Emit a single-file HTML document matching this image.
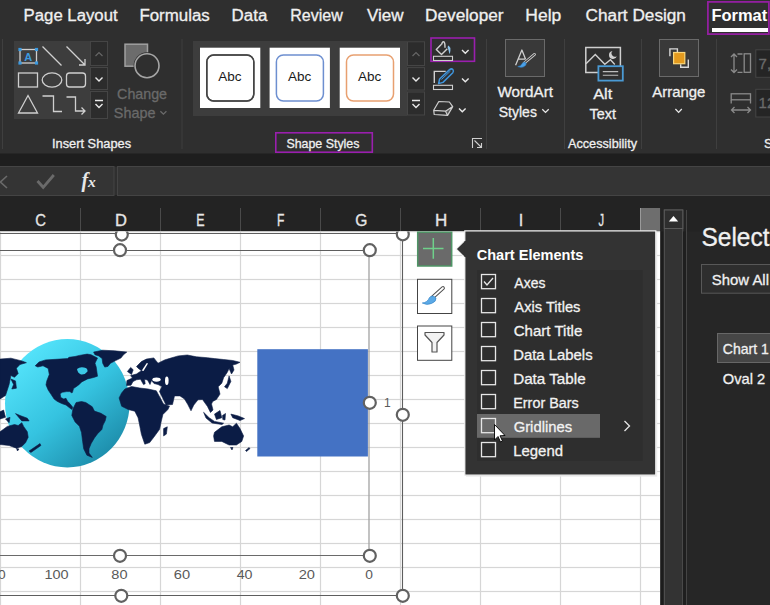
<!DOCTYPE html>
<html><head><meta charset="utf-8"><style>
html,body{margin:0;padding:0;background:#2f2f2f;overflow:hidden;width:770px;height:605px}
svg{display:block}
text{white-space:pre}
</style></head><body>
<svg width="770" height="605" viewBox="0 0 770 605" shape-rendering="geometricPrecision">
<rect x="707.9" y="1.9" width="61" height="32.2" fill="none" stroke="#921f9f" stroke-width="1.8"/>
<rect x="712" y="28" width="56" height="4" fill="#ffffff"/>
<rect x="2.0" y="39" width="1" height="110" fill="#3f3f3f"/>
<rect x="181.5" y="39" width="1" height="110" fill="#3f3f3f"/>
<rect x="486.0" y="39" width="1" height="110" fill="#3f3f3f"/>
<rect x="564.0" y="39" width="1" height="110" fill="#3f3f3f"/>
<rect x="641.0" y="39" width="1" height="110" fill="#3f3f3f"/>
<rect x="716.0" y="39" width="1" height="110" fill="#3f3f3f"/>
<rect x="14" y="41" width="76" height="78" fill="#3d3d3d"/>
<rect x="90.5" y="41.5" width="17" height="24.0" fill="#2c2c2c" stroke="#454545" stroke-width="1"/>
<rect x="90.5" y="67.5" width="17" height="22.0" fill="#2c2c2c" stroke="#454545" stroke-width="1"/>
<rect x="90.5" y="91.5" width="17" height="27.0" fill="#2c2c2c" stroke="#454545" stroke-width="1"/>
<path d="M95.5 56 L99 52.5 L102.5 56" fill="none" stroke="#666" stroke-width="1.2"/>
<path d="M95.5 77.5 L99 81 L102.5 77.5" fill="none" stroke="#e8e8e8" stroke-width="1.4"/>
<path d="M95 100.5 H103 M95.5 104 L99 107.5 L102.5 104" fill="none" stroke="#e8e8e8" stroke-width="1.4"/>
<rect x="20" y="49.5" width="16.5" height="13.5" fill="none" stroke="#cfcfcf" stroke-width="1.3"/>
<rect x="18.4" y="47.9" width="3.2" height="3.2" fill="#3c9ae0"/>
<rect x="34.9" y="47.9" width="3.2" height="3.2" fill="#3c9ae0"/>
<rect x="18.4" y="61.4" width="3.2" height="3.2" fill="#3c9ae0"/>
<rect x="34.9" y="61.4" width="3.2" height="3.2" fill="#3c9ae0"/>
<text x="28.2" y="60.5" font-family="Liberation Sans" font-weight="bold" font-size="11" fill="#3c9ae0" text-anchor="middle">A</text>
<path d="M42.5 46.5 L61.5 65.5" stroke="#cfcfcf" stroke-width="1.3"/>
<path d="M66.5 46.5 L85 65 M85 59 V65 H79" fill="none" stroke="#cfcfcf" stroke-width="1.3"/>
<rect x="18.5" y="73" width="19" height="14" fill="none" stroke="#cfcfcf" stroke-width="1.3"/>
<ellipse cx="52" cy="80" rx="9.8" ry="7.2" fill="none" stroke="#cfcfcf" stroke-width="1.3"/>
<rect x="66.5" y="73" width="19" height="14" rx="3" fill="none" stroke="#cfcfcf" stroke-width="1.3"/>
<path d="M28 95.5 L37.5 113 H18.5 Z" fill="none" stroke="#cfcfcf" stroke-width="1.3" stroke-linejoin="miter"/>
<path d="M42.5 96 H53.5 V111.5 H62" fill="none" stroke="#cfcfcf" stroke-width="1.3"/>
<path d="M66.5 97 H75.5 V111 H85 M81.5 107.5 L85 111 L81.5 114.5" fill="none" stroke="#cfcfcf" stroke-width="1.3"/>
<rect x="125" y="44.2" width="22.5" height="22" fill="#6c6c6c" stroke="#a0a0a0" stroke-width="1.5"/>
<circle cx="147" cy="65.7" r="13.4" fill="#2f2f2f"/>
<circle cx="147" cy="65.7" r="12" fill="#2f2f2f" stroke="#a5a5a5" stroke-width="1.6"/>
<path d="M160.4 111.2 L163.4 114.2 L166.4 111.2" fill="none" stroke="#6a6a6a" stroke-width="1.3"/>
<rect x="193" y="41" width="214" height="75" fill="#3d3d3d"/>
<rect x="200" y="47.7" width="60.3" height="60.3" fill="#ffffff"/>
<rect x="206.8" y="55" width="47" height="46" rx="7" fill="none" stroke="#555555" stroke-width="1.5"/>
<rect x="269.6" y="47.7" width="60.3" height="60.3" fill="#ffffff"/>
<rect x="276.40000000000003" y="55" width="47" height="46" rx="7" fill="none" stroke="#6d8fd0" stroke-width="1.5"/>
<rect x="339.7" y="47.7" width="60.3" height="60.3" fill="#ffffff"/>
<rect x="346.5" y="55" width="47" height="46" rx="7" fill="none" stroke="#e8a070" stroke-width="1.5"/>
<rect x="206.8" y="55" width="47" height="46" rx="7" fill="none" stroke="#444" stroke-width="1.5"/>
<rect x="407.5" y="41.8" width="17" height="23.700000000000003" fill="#2c2c2c" stroke="#454545" stroke-width="1"/>
<rect x="407.5" y="67.6" width="17" height="22.400000000000006" fill="#2c2c2c" stroke="#454545" stroke-width="1"/>
<rect x="407.5" y="92" width="17" height="23" fill="#2c2c2c" stroke="#454545" stroke-width="1"/>
<path d="M412.5 56 L416 52.5 L419.5 56" fill="none" stroke="#666" stroke-width="1.2"/>
<path d="M412.5 77.5 L416 81 L419.5 77.5" fill="none" stroke="#e8e8e8" stroke-width="1.4"/>
<path d="M412 100.5 H420 M412.5 104 L416 107.5 L419.5 104" fill="none" stroke="#e8e8e8" stroke-width="1.4"/>
<rect x="431" y="38" width="43.5" height="23.3" fill="none" stroke="#9a1fae" stroke-width="1.6"/>
<path d="M441.2 44.5 L436.3 49.5 L441.5 54.6 L447.3 48.8" fill="none" stroke="#cfcfcf" stroke-width="1.4" stroke-linejoin="round"/>
<path d="M441.6 44.2 Q442.8 40.5 444.3 42.2 Q445 43.5 445 47.2" fill="none" stroke="#cfcfcf" stroke-width="1.4" stroke-linecap="round"/>
<path d="M448.6 45.5 Q450.6 47 450.4 50.5 Q450.2 53 449.5 54 Q448.6 50 447.6 47.5 Q447.6 46 448.6 45.5 Z" fill="#8cc3ea"/>
<rect x="433.5" y="56.3" width="19" height="4.2" fill="none" stroke="#cfcfcf" stroke-width="1.1"/>
<path d="M462 50 L465.3 53.2 L468.6 50" fill="none" stroke="#e8e8e8" stroke-width="1.4"/>
<path d="M445.7 71.4 H434.3 V83" fill="none" stroke="#cfcfcf" stroke-width="1.4"/>
<path d="M438.6 83.6 L439.6 79 L449.6 69.6 Q451.5 68.2 452.9 69.6 Q454.2 71.2 452.8 72.8 L443 82.4 Z" fill="#2f2f2f" stroke="#3f95dd" stroke-width="1.5" stroke-linejoin="round"/>
<path d="M441.5 79.5 L450.5 71" stroke="#3f95dd" stroke-width="1" />
<rect x="433.5" y="85.3" width="19" height="4.2" fill="none" stroke="#cfcfcf" stroke-width="1.1"/>
<path d="M462 78.5 L465.3 81.8 L468.6 78.5" fill="none" stroke="#e8e8e8" stroke-width="1.4"/>
<path d="M445.5 111.2 L452.7 106.6 L447.6 115.4 Z" fill="#5a5a5a"/>
<path d="M433.7 110.3 L438.8 101.5 L449.4 102 L452.7 106.6 L447.6 115.4 L434.2 114.5 Z M433.7 110.3 L445.5 111.2 L452.7 106.6 M445.5 111.2 L447.6 115.4" fill="none" stroke="#cfcfcf" stroke-width="1.2" stroke-linejoin="round"/>
<path d="M459 108.5 L462.3 111.8 L465.6 108.5" fill="none" stroke="#e8e8e8" stroke-width="1.4"/>
<rect x="275.8" y="132.8" width="96.5" height="19.4" fill="none" stroke="#9a1fae" stroke-width="1.6"/>
<path d="M472.5 148 V138.5 H482 M474.5 140.5 L481.5 147.5 M477 147.5 H481.5 V143" fill="none" stroke="#cfcfcf" stroke-width="1.1"/>
<rect x="505.5" y="39.5" width="39" height="37" fill="#393939" stroke="#6a6a6a" stroke-width="1"/>
<path d="M515.6 65.2 L521.9 50 L525.6 59.2 M518.5 59.2 H525.6" fill="none" stroke="#cfcfcf" stroke-width="1.3" stroke-linejoin="round"/>
<path d="M524 63.2 L534.5 54.4" stroke="#cfcfcf" stroke-width="2.8" stroke-linecap="round"/>
<path d="M524 63.2 L534.5 54.4" stroke="#393939" stroke-width="1.1" stroke-linecap="round"/>
<path d="M517.8 66.6 Q521 66.2 522.2 63.4 Q524.5 61.2 526.2 63 Q526.5 65.5 523.5 66.8 Q520.5 68 517.8 66.6 Z" fill="#4aa0e6" stroke="#2f7fc8" stroke-width="0.6"/>
<path d="M542.3 109.2 L545.5 112.4 L548.7 109.2" fill="none" stroke="#e8e8e8" stroke-width="1.3"/>
<path d="M598.5 72.6 H585.8 V47.6 H620.4 V66" fill="none" stroke="#cfcfcf" stroke-width="1.5"/>
<path d="M586 63.8 L595.3 54.5 L604.8 64.2 L610.5 59.8 L614.8 64.4" fill="none" stroke="#cfcfcf" stroke-width="1.4"/>
<path d="M612.5 51 A4 4 0 1 0 616.8 56.2 A3.4 3.4 0 0 1 612.5 51 Z" fill="#cfcfcf"/>
<rect x="598.4" y="66.2" width="24.4" height="14.4" fill="#2f2f2f" stroke="#4a9ad4" stroke-width="1.8"/>
<path d="M602.8 71.6 H618.2 M602.8 75.3 H618.2" stroke="#bdbdbd" stroke-width="1.1"/>
<rect x="659.5" y="39.5" width="39" height="37" fill="#393939" stroke="#6a6a6a" stroke-width="1"/>
<path d="M669.9 56.2 V48.9 H677.4 V52 M688.3 59.6 V67.3 H680.7 V64.2" fill="none" stroke="#d8d8d8" stroke-width="1.4"/>
<rect x="673.6" y="52.5" width="11.2" height="11.2" fill="#e39a1e" stroke="#fbd77a" stroke-width="1.2"/>
<path d="M675.4 109 L678.6 112.4 L681.8 109" fill="none" stroke="#e8e8e8" stroke-width="1.3"/>
<path d="M734 54 V72.5 M731 57 L734 54 L737 57 M731 69.5 L734 72.5 L737 69.5 M737.5 54 H742.5 M737.5 72.3 H742.5" fill="none" stroke="#8a8a8a" stroke-width="1.3"/>
<rect x="744.2" y="53.8" width="6.3" height="18.5" fill="none" stroke="#8a8a8a" stroke-width="1.3"/>
<rect x="755.8" y="49.8" width="16" height="27.5" fill="#252525" stroke="#444444" stroke-width="1"/>
<rect x="731.2" y="93.8" width="19.3" height="6" fill="none" stroke="#8a8a8a" stroke-width="1.3"/>
<path d="M731.2 100 V103.5 M750.5 100 V103.5 M731.5 110 H750.5 M734.5 107 L731.5 110 L734.5 113 M747.5 107 L750.5 110 L747.5 113" fill="none" stroke="#8a8a8a" stroke-width="1.3"/>
<rect x="755.8" y="89.3" width="16" height="27.7" fill="#252525" stroke="#444444" stroke-width="1"/>
<rect x="0" y="153.5" width="770" height="13" fill="#1e1e1e"/>
<rect x="0" y="195" width="770" height="13" fill="#232323"/>
<rect x="-2" y="166.5" width="116" height="29" fill="#343434" stroke="#444444" stroke-width="1"/>
<rect x="117.5" y="166.5" width="660" height="29" fill="#343434" stroke="#444444" stroke-width="1"/>
<path d="M7 176 L0.5 182 L7 188" fill="none" stroke="#6a6a6a" stroke-width="1.6"/>
<path d="M37.5 181 L43.2 187.3 L53.8 175" fill="none" stroke="#6a6a6a" stroke-width="2.8"/>
<rect x="0" y="208" width="640" height="23.5" fill="#232323"/>
<rect x="80" y="208" width="1" height="23.5" fill="#4a4a4a"/>
<rect x="160" y="208" width="1" height="23.5" fill="#4a4a4a"/>
<rect x="240" y="208" width="1" height="23.5" fill="#4a4a4a"/>
<rect x="320" y="208" width="1" height="23.5" fill="#4a4a4a"/>
<rect x="400" y="208" width="1" height="23.5" fill="#4a4a4a"/>
<rect x="480" y="208" width="1" height="23.5" fill="#4a4a4a"/>
<rect x="560" y="208" width="1" height="23.5" fill="#4a4a4a"/>
<rect x="640" y="208" width="20" height="23.5" fill="#6e6e6e"/>
<rect x="640" y="208" width="1" height="23.5" fill="#9a9a9a"/>
<rect x="0" y="231.5" width="660.5" height="380" fill="#ffffff"/>
<rect x="0" y="231" width="660" height="1.2" fill="#c8c8c8"/>
<rect x="-0.09999999999999998" y="232" width="1.2" height="380" fill="#d6d6d6"/>
<rect x="79.9" y="232" width="1.2" height="380" fill="#d6d6d6"/>
<rect x="159.9" y="232" width="1.2" height="380" fill="#d6d6d6"/>
<rect x="239.9" y="232" width="1.2" height="380" fill="#d6d6d6"/>
<rect x="319.9" y="232" width="1.2" height="380" fill="#d6d6d6"/>
<rect x="399.9" y="232" width="1.2" height="380" fill="#d6d6d6"/>
<rect x="479.9" y="232" width="1.2" height="380" fill="#d6d6d6"/>
<rect x="559.9" y="232" width="1.2" height="380" fill="#d6d6d6"/>
<rect x="639.9" y="232" width="1.2" height="380" fill="#d6d6d6"/>
<rect x="0" y="254.9" width="660" height="1.2" fill="#d6d6d6"/>
<rect x="0" y="278.9" width="660" height="1.2" fill="#d6d6d6"/>
<rect x="0" y="302.9" width="660" height="1.2" fill="#d6d6d6"/>
<rect x="0" y="326.9" width="660" height="1.2" fill="#d6d6d6"/>
<rect x="0" y="350.9" width="660" height="1.2" fill="#d6d6d6"/>
<rect x="0" y="374.9" width="660" height="1.2" fill="#d6d6d6"/>
<rect x="0" y="398.9" width="660" height="1.2" fill="#d6d6d6"/>
<rect x="0" y="422.9" width="660" height="1.2" fill="#d6d6d6"/>
<rect x="0" y="446.9" width="660" height="1.2" fill="#d6d6d6"/>
<rect x="0" y="470.9" width="660" height="1.2" fill="#d6d6d6"/>
<rect x="0" y="494.9" width="660" height="1.2" fill="#d6d6d6"/>
<rect x="0" y="518.9" width="660" height="1.2" fill="#d6d6d6"/>
<rect x="0" y="542.9" width="660" height="1.2" fill="#d6d6d6"/>
<rect x="0" y="566.9" width="660" height="1.2" fill="#d6d6d6"/>
<rect x="0" y="590.9" width="660" height="1.2" fill="#d6d6d6"/>
<rect x="660.5" y="208" width="110" height="400" fill="#232323"/>
<rect x="687" y="231.5" width="83" height="380" fill="#262626"/>
<rect x="660.5" y="231.5" width="3.5" height="380" fill="#1c1c1c"/>
<rect x="664.3" y="210" width="18.5" height="400" fill="#333333" stroke="#555555" stroke-width="1"/>
<rect x="664.3" y="210" width="18.5" height="18.5" fill="#2e2e2e" stroke="#5a5a5a" stroke-width="1"/>
<path d="M668.8 221.5 L673.5 216 L678.2 221.5 Z" fill="#ffffff"/>
<rect x="683" y="231.5" width="3" height="400" fill="#1f1f1f"/>
<rect x="686" y="210" width="1" height="400" fill="#454545"/>
<rect x="701.5" y="264.5" width="80" height="28.7" fill="#2e2e2e" stroke="#585858" stroke-width="1"/>
<rect x="717.5" y="333.5" width="60" height="29" fill="#464646" stroke="#676767" stroke-width="1"/>
<path d="M-10 233.5 H402.5 V595.5 H-10" fill="none" stroke="#5e5e5e" stroke-width="1.1"/>
<path d="M-10 250.5 H369" fill="none" stroke="#5e5e5e" stroke-width="1.1"/>
<path d="M369 250.5 V555.5" fill="none" stroke="#a2a2a2" stroke-width="1.3"/>
<path d="M369 555.5 H-10" fill="none" stroke="#6a6a6a" stroke-width="1.1"/>
<defs><linearGradient id="gl" x1="0.15" y1="0.1" x2="0.85" y2="0.95"><stop offset="0" stop-color="#55e4fb"/><stop offset="0.5" stop-color="#35c3e0"/><stop offset="1" stop-color="#1b88a6"/></linearGradient></defs>
<ellipse cx="67.3" cy="403.2" rx="62.3" ry="64.2" fill="url(#gl)"/>
<path d="M35.2 365.8 L39.1 361.9 L45.6 359.9 L56.0 359.3 L67.7 358.6 L69.0 357.3 L75.0 356.5 L79.4 355.4 L87.1 354.1 L91.0 354.7 L97.5 358.0 L95.0 363.2 L96.2 367.0 L97.5 376.2 L93.6 377.5 L87.6 378.9 L81.7 381.9 L78.7 384.9 L73.5 388.6 L72.7 391.6 L72.0 393.0 L69.8 391.6 L66.8 391.6 L62.3 392.3 L60.1 393.8 L60.8 397.5 L63.8 399.0 L66.0 398.3 L67.5 401.3 L69.8 403.5 L72.7 407.2 L72.0 409.4 L69.8 408.0 L66.0 405.0 L61.6 403.5 L57.1 401.3 L54.1 399.0 L51.2 394.6 L48.2 390.1 L46.0 384.9 L46.7 381.2 L49.3 374.5 L48.2 368.4 L43.0 365.8 L37.8 367.0 Z M93.6 352.1 L102.7 350.2 L114.4 350.8 L126.8 352.1 L123.5 354.7 L120.9 358.0 L115.7 360.6 L110.5 363.2 L107.9 366.4 L104.7 367.1 L102.7 363.2 L102.1 358.6 L98.8 356.0 L94.9 354.7 Z M76.1 402.5 L81.5 401.5 L85.8 402.5 L92.3 406.8 L94.4 411.1 L100.9 413.3 L106.2 416.5 L105.2 420.8 L103.0 425.1 L101.9 429.4 L97.6 433.7 L94.4 438.0 L91.2 443.4 L89.0 448.8 L89.0 453.1 L92.3 457.4 L86.9 455.2 L83.7 448.8 L82.6 441.2 L81.5 432.6 L79.4 426.2 L75.1 421.9 L71.8 415.4 L72.9 409.0 Z M127.4 371.5 L130.7 367.4 L133.2 369.8 L131.5 374.5 Z M126.6 385.5 L126.9 380.6 L132.4 378.1 L130.7 375.6 L136.5 374.0 L141.4 370.7 L138.1 368.2 L136.5 366.5 L141.4 361.6 L146.4 359.1 L153.8 357.9 L158.0 363.2 L164.6 359.9 L169.1 358.6 L178.2 355.9 L187.3 355.0 L196.4 356.8 L207.3 357.7 L214.5 358.6 L223.6 359.5 L232.7 360.5 L240.0 362.3 L236.4 364.1 L232.7 365.0 L234.0 370.0 L231.5 374.0 L229.1 368.6 L227.3 372.3 L223.6 377.7 L221.8 383.2 L218.2 386.8 L220.0 394.1 L216.4 399.5 L212.7 401.4 L211.5 404.0 L213.0 410.0 L210.5 412.5 L207.5 406.5 L205.0 403.0 L202.5 399.5 L198.0 399.8 L193.8 405.0 L191.0 410.8 L187.8 404.5 L184.5 399.0 L180.0 395.9 L174.5 395.9 L172.5 404.5 L166.0 405.0 L159.5 391.5 L162.0 386.5 L158.0 384.5 L154.0 383.5 L151.5 380.5 L150.0 384.5 L147.5 380.0 L144.5 379.2 L145.2 383.8 L143.5 384.6 L140.5 379.2 L136.5 379.8 L133.0 381.5 L131.0 385.2 Z M119.1 397.9 L121.6 393.0 L124.9 389.0 L131.5 386.5 L139.8 388.0 L148.1 389.0 L156.3 390.8 L157.5 393.0 L163.5 404.0 L169.5 406.2 L167.9 409.5 L162.9 414.5 L161.3 421.1 L159.6 429.3 L154.7 436.0 L149.7 442.6 L144.8 444.2 L141.4 434.3 L139.8 426.0 L138.1 417.8 L134.8 411.2 L128.2 409.5 L121.6 406.2 Z M163.6 428.6 L167.3 426.8 L166.4 434.1 L163.6 435.9 Z M229.1 375.9 L230.9 381.4 L227.3 388.6 L224.5 386.8 L227.3 383.2 Z M203.6 412.3 L209.1 417.7 L214.5 421.4 L223.6 423.2 L222.0 424.5 L212.0 423.0 L206.0 418.0 Z M214.5 414.1 L220.0 410.5 L221.8 417.7 L216.4 419.5 Z M222.5 415.5 L225.5 413.5 L225.0 420.0 L222.8 419.5 Z M230.9 414.1 L238.2 415.9 L244.5 418.6 L240.0 420.5 L232.7 417.7 Z M214.5 432.3 L221.8 426.8 L229.1 425.0 L232.7 426.8 L236.4 423.2 L240.0 428.6 L243.6 435.9 L241.8 441.4 L236.4 445.0 L229.1 445.0 L221.8 441.4 L214.5 441.4 L213.6 435.9 Z M230.5 447.5 L233.0 447.5 L232.0 450.0 Z M245.5 450.5 L249.1 447.6 L250.0 448.6 L246.5 451.5 Z M0.0 359.1 L10.9 358.2 L21.8 360.9 L26.4 362.7 L20.0 364.5 L16.4 368.2 L18.2 373.6 L14.5 377.3 L10.9 375.5 L9.1 384.5 L5.5 395.5 L0.0 399.0 Z M10.9 379.0 L15.5 380.9 L16.4 388.2 L11.8 389.0 L13.6 384.5 Z M0.0 411.8 L3.6 410.0 L5.5 417.3 L0.0 419.0 Z M5.5 419.0 L10.0 417.3 L9.1 422.7 Z M15.5 413.6 L20.0 415.5 L27.3 418.2 L29.1 420.9 L21.8 420.9 Z M0.0 431.8 L7.3 426.4 L14.5 424.5 L18.2 425.5 L21.8 422.7 L23.6 426.4 L27.3 431.8 L28.2 437.3 L25.5 442.7 L21.8 446.4 L16.4 448.2 L9.1 445.5 L0.0 444.5 Z M16.5 448.5 L19.0 449.0 L17.5 451.0 Z M29.1 451.0 L40.0 443.6 L40.9 445.5 L30.9 452.5 Z" fill="#0b1c45" stroke="#0b1c45" stroke-width="0.6" stroke-linejoin="round"/>
<path d="M77 369 Q80 366.5 84 367.5 Q88 368 87.5 371.5 Q85 375 81 374.5 Q77.5 373 77 369 Z" fill="#3cc8e6"/>
<path d="M141.8 370.5 L146.8 363 L148 363.6 L143.5 371 Z" fill="#ffffff"/>
<ellipse cx="156.5" cy="379.6" rx="4.2" ry="2.1" fill="#ffffff"/>
<ellipse cx="166.8" cy="380.8" rx="1.8" ry="4.2" fill="#ffffff"/>
<rect x="257.3" y="349.2" width="110.6" height="107.3" fill="#4472c4"/>
<circle cx="120" cy="250.2" r="6" fill="#ffffff" stroke="#616161" stroke-width="2.2"/>
<circle cx="369.8" cy="250.2" r="6" fill="#ffffff" stroke="#616161" stroke-width="2.2"/>
<circle cx="369.8" cy="402.8" r="6" fill="#ffffff" stroke="#616161" stroke-width="2.2"/>
<circle cx="369.8" cy="555.8" r="6" fill="#ffffff" stroke="#616161" stroke-width="2.2"/>
<circle cx="120" cy="555.8" r="6" fill="#ffffff" stroke="#616161" stroke-width="2.2"/>
<circle cx="402.8" cy="414.8" r="6" fill="#ffffff" stroke="#616161" stroke-width="2.2"/>
<circle cx="402.8" cy="595.8" r="6" fill="#ffffff" stroke="#616161" stroke-width="2.2"/>
<circle cx="121.3" cy="595.8" r="6" fill="#ffffff" stroke="#616161" stroke-width="2.2"/>
<clipPath id="below"><rect x="0" y="231.5" width="770" height="400"/></clipPath>
<g clip-path="url(#below)">
<circle cx="121.8" cy="234.6" r="6" fill="#ffffff" stroke="#616161" stroke-width="2.2"/>
<circle cx="402.8" cy="234.3" r="6" fill="#ffffff" stroke="#616161" stroke-width="2.2"/>
</g>
<rect x="417.7" y="232.2" width="34" height="33.8" fill="#6a6a6a" stroke="#4f9566" stroke-width="1.5"/>
<path d="M423 248.5 H443.5 M433.3 238 V258.8" stroke="#6fd08a" stroke-width="1.5"/>
<rect x="417.5" y="279.3" width="34.3" height="34.2" fill="#ffffff" stroke="#444444" stroke-width="1"/>
<path d="M433 297 L443 288" stroke="#505050" stroke-width="3.8" stroke-linecap="round"/>
<path d="M433 297 L443 288" stroke="#ffffff" stroke-width="1.8" stroke-linecap="round"/>
<path d="M422.3 303 Q427.5 302.5 429.5 297.5 Q432.5 294.5 436 298 Q436.5 301.5 431.5 303.5 Q426.5 305.5 422.3 303 Z" fill="#5aa9e6" stroke="#3a87c8" stroke-width="0.7"/>
<rect x="417.5" y="326" width="34.3" height="34.3" fill="#ffffff" stroke="#444444" stroke-width="1"/>
<path d="M425 332.5 H444 V335 L437 342.5 V352 H432 V342.5 L425 335 Z" fill="#f2f2f2" stroke="#555" stroke-width="1.2" stroke-linejoin="round"/>
<rect x="466" y="232" width="191.2" height="244.6" fill="#e8e8e8"/>
<path d="M464.8 230.8 H655.8 V475.2 H464.8 V257.6 L456 249 L464.8 240.6 Z" fill="#333333" stroke="#f4f4f4" stroke-width="1.2"/>
<rect x="464.5" y="241" width="1.5" height="16" fill="#333333"/>
<rect x="477" y="270" width="165.6" height="191" fill="#2e2e2e"/>
<rect x="477" y="414" width="123" height="23.8" fill="#696969"/>
<rect x="481.5" y="274.5" width="14" height="14.2" fill="none" stroke="#e6e6e6" stroke-width="1.3"/>
<rect x="481.5" y="298.5" width="14" height="14.2" fill="none" stroke="#e6e6e6" stroke-width="1.3"/>
<rect x="481.5" y="322.5" width="14" height="14.2" fill="none" stroke="#e6e6e6" stroke-width="1.3"/>
<rect x="481.5" y="346.5" width="14" height="14.2" fill="none" stroke="#e6e6e6" stroke-width="1.3"/>
<rect x="481.5" y="370.5" width="14" height="14.2" fill="none" stroke="#e6e6e6" stroke-width="1.3"/>
<rect x="481.5" y="394.5" width="14" height="14.2" fill="none" stroke="#e6e6e6" stroke-width="1.3"/>
<rect x="481.5" y="418.5" width="14" height="14.2" fill="none" stroke="#e6e6e6" stroke-width="1.3"/>
<rect x="481.5" y="442.5" width="14" height="14.2" fill="none" stroke="#e6e6e6" stroke-width="1.3"/>
<path d="M484 281.5 L487 285 L493 278" fill="none" stroke="#e6e6e6" stroke-width="1.3"/>
<path d="M624.5 421 L629.5 426 L624.5 431" fill="none" stroke="#e6e6e6" stroke-width="1.3"/>
<path d="M494.5 424.5 V440 L498 436.5 L500.5 442 L502.5 441 L500 435.8 L505 435.5 Z" fill="#ffffff" stroke="#000" stroke-width="0.9" stroke-linejoin="round"/>
<text x="23.63" y="21" font-size="16" fill="#f0f0f0" font-family="Liberation Sans" stroke="#f0f0f0" stroke-width="0.3" textLength="94.00" lengthAdjust="spacingAndGlyphs">Page Layout</text>
<text x="139.42" y="21" font-size="16" fill="#f0f0f0" font-family="Liberation Sans" stroke="#f0f0f0" stroke-width="0.3" textLength="70.29" lengthAdjust="spacingAndGlyphs">Formulas</text>
<text x="231.61" y="21" font-size="16" fill="#f0f0f0" font-family="Liberation Sans" stroke="#f0f0f0" stroke-width="0.3" textLength="35.69" lengthAdjust="spacingAndGlyphs">Data</text>
<text x="290.18" y="21" font-size="16" fill="#f0f0f0" font-family="Liberation Sans" stroke="#f0f0f0" stroke-width="0.3" textLength="52.58" lengthAdjust="spacingAndGlyphs">Review</text>
<text x="366.93" y="21" font-size="16" fill="#f0f0f0" font-family="Liberation Sans" stroke="#f0f0f0" stroke-width="0.3" textLength="36.53" lengthAdjust="spacingAndGlyphs">View</text>
<text x="425.09" y="21" font-size="16" fill="#f0f0f0" font-family="Liberation Sans" stroke="#f0f0f0" stroke-width="0.3" textLength="78.50" lengthAdjust="spacingAndGlyphs">Developer</text>
<text x="525.37" y="21" font-size="16" fill="#f0f0f0" font-family="Liberation Sans" stroke="#f0f0f0" stroke-width="0.3" textLength="35.86" lengthAdjust="spacingAndGlyphs">Help</text>
<text x="585.63" y="21" font-size="16" fill="#f0f0f0" font-family="Liberation Sans" stroke="#f0f0f0" stroke-width="0.3" textLength="100.29" lengthAdjust="spacingAndGlyphs">Chart Design</text>
<text x="711.40" y="21" font-size="16" fill="#ffffff" font-family="Liberation Sans" font-weight="bold" textLength="55.80" lengthAdjust="spacingAndGlyphs">Format</text>
<text x="117.08" y="99.1" font-size="15" fill="#6a6a6a" font-family="Liberation Sans" stroke="#6a6a6a" stroke-width="0.3" textLength="49.96" lengthAdjust="spacingAndGlyphs">Change</text>
<text x="113.85" y="118.2" font-size="15" fill="#6a6a6a" font-family="Liberation Sans" stroke="#6a6a6a" stroke-width="0.3" textLength="41.70" lengthAdjust="spacingAndGlyphs">Shape</text>
<text x="52.02" y="147.8" font-size="12.5" fill="#f0f0f0" font-family="Liberation Sans" stroke="#f0f0f0" stroke-width="0.3" textLength="79.05" lengthAdjust="spacingAndGlyphs">Insert Shapes</text>
<text x="230.00" y="80.9" font-size="13.5" fill="#1a1a1a" font-family="Liberation Sans" text-anchor="middle">Abc</text>
<text x="299.60" y="80.9" font-size="13.5" fill="#1a1a1a" font-family="Liberation Sans" text-anchor="middle">Abc</text>
<text x="369.70" y="80.9" font-size="13.5" fill="#1a1a1a" font-family="Liberation Sans" text-anchor="middle">Abc</text>
<text x="286.44" y="148" font-size="13" fill="#f0f0f0" font-family="Liberation Sans" stroke="#f0f0f0" stroke-width="0.3" textLength="73.01" lengthAdjust="spacingAndGlyphs">Shape Styles</text>
<text x="497.53" y="96.8" font-size="15.2" fill="#f0f0f0" font-family="Liberation Sans" stroke="#f0f0f0" stroke-width="0.3" textLength="55.48" lengthAdjust="spacingAndGlyphs">WordArt</text>
<text x="498.76" y="117.2" font-size="15.2" fill="#f0f0f0" font-family="Liberation Sans" stroke="#f0f0f0" stroke-width="0.3" textLength="38.14" lengthAdjust="spacingAndGlyphs">Styles</text>
<text x="593.17" y="98.9" font-size="15.2" fill="#f0f0f0" font-family="Liberation Sans" stroke="#f0f0f0" stroke-width="0.3" textLength="19.05" lengthAdjust="spacingAndGlyphs">Alt</text>
<text x="589.50" y="118.8" font-size="15.2" fill="#f0f0f0" font-family="Liberation Sans" stroke="#f0f0f0" stroke-width="0.3" textLength="26.40" lengthAdjust="spacingAndGlyphs">Text</text>
<text x="567.98" y="147.7" font-size="13" fill="#f0f0f0" font-family="Liberation Sans" stroke="#f0f0f0" stroke-width="0.3" textLength="69.05" lengthAdjust="spacingAndGlyphs">Accessibility</text>
<text x="652.27" y="97.2" font-size="15.2" fill="#f0f0f0" font-family="Liberation Sans" stroke="#f0f0f0" stroke-width="0.3" textLength="53.09" lengthAdjust="spacingAndGlyphs">Arrange</text>
<text x="758.60" y="68.7" font-size="15" fill="#6a6a6a" font-family="Liberation Sans" stroke="#6a6a6a" stroke-width="0.3">7,5</text>
<text x="758.60" y="108.4" font-size="15" fill="#6a6a6a" font-family="Liberation Sans" stroke="#6a6a6a" stroke-width="0.3">12</text>
<text x="764.00" y="147.5" font-size="13" fill="#f0f0f0" font-family="Liberation Sans" stroke="#f0f0f0" stroke-width="0.3">S</text>
<text x="81.50" y="186.5" font-size="20" fill="#e8e8e8" font-family="Liberation Serif" font-weight="bold" font-style="italic">f</text>
<text x="88.00" y="187.3" font-size="15.5" fill="#e8e8e8" font-family="Liberation Serif" font-weight="bold" font-style="italic">x</text>
<text x="35.35" y="225.8" font-size="16.3" fill="#e6e6e6" font-family="Liberation Sans" stroke="#e6e6e6" stroke-width="0.3" textLength="10.72" lengthAdjust="spacingAndGlyphs">C</text>
<text x="114.94" y="225.8" font-size="16.3" fill="#e6e6e6" font-family="Liberation Sans" stroke="#e6e6e6" stroke-width="0.3" textLength="11.95" lengthAdjust="spacingAndGlyphs">D</text>
<text x="196.37" y="225.8" font-size="16.3" fill="#e6e6e6" font-family="Liberation Sans" stroke="#e6e6e6" stroke-width="0.3" textLength="8.37" lengthAdjust="spacingAndGlyphs">E</text>
<text x="277.01" y="225.8" font-size="16.3" fill="#e6e6e6" font-family="Liberation Sans" stroke="#e6e6e6" stroke-width="0.3" textLength="7.37" lengthAdjust="spacingAndGlyphs">F</text>
<text x="355.31" y="225.8" font-size="16.3" fill="#e6e6e6" font-family="Liberation Sans" stroke="#e6e6e6" stroke-width="0.3" textLength="12.15" lengthAdjust="spacingAndGlyphs">G</text>
<text x="434.90" y="225.8" font-size="16.3" fill="#e6e6e6" font-family="Liberation Sans" stroke="#e6e6e6" stroke-width="0.3" textLength="12.28" lengthAdjust="spacingAndGlyphs">H</text>
<text x="598.42" y="225.8" font-size="16.3" fill="#e6e6e6" font-family="Liberation Sans" stroke="#e6e6e6" stroke-width="0.3" textLength="5.61" lengthAdjust="spacingAndGlyphs">J</text>
<text x="520.90" y="225.8" font-size="16.3" fill="#e6e6e6" font-family="Liberation Sans" stroke="#e6e6e6" stroke-width="0.3" text-anchor="middle">I</text>
<text x="701.49" y="246.4" font-size="25.5" fill="#f0f0f0" font-family="Liberation Sans" stroke="#f0f0f0" stroke-width="0.3" textLength="67.99" lengthAdjust="spacingAndGlyphs">Select</text>
<text x="711.83" y="284.8" font-size="15.2" fill="#f0f0f0" font-family="Liberation Sans" stroke="#f0f0f0" stroke-width="0.3" textLength="57.15" lengthAdjust="spacingAndGlyphs">Show All</text>
<text x="722.79" y="353.7" font-size="14.8" fill="#f0f0f0" font-family="Liberation Sans" stroke="#f0f0f0" stroke-width="0.3" textLength="46.00" lengthAdjust="spacingAndGlyphs">Chart 1</text>
<text x="722.80" y="383.5" font-size="14.8" fill="#f0f0f0" font-family="Liberation Sans" stroke="#f0f0f0" stroke-width="0.3" textLength="42.43" lengthAdjust="spacingAndGlyphs">Oval 2</text>
<text x="384.00" y="406.8" font-size="12" fill="#595959" font-family="Liberation Sans">1</text>
<text x="-2.04" y="578.9" font-size="13" fill="#595959" font-family="Liberation Sans" textLength="7.68" lengthAdjust="spacingAndGlyphs">0</text>
<text x="44.40" y="578.9" font-size="13" fill="#595959" font-family="Liberation Sans" textLength="24.17" lengthAdjust="spacingAndGlyphs">100</text>
<text x="111.37" y="578.9" font-size="13" fill="#595959" font-family="Liberation Sans" textLength="16.20" lengthAdjust="spacingAndGlyphs">80</text>
<text x="173.76" y="578.9" font-size="13" fill="#595959" font-family="Liberation Sans" textLength="16.32" lengthAdjust="spacingAndGlyphs">60</text>
<text x="236.67" y="578.9" font-size="13" fill="#595959" font-family="Liberation Sans" textLength="15.89" lengthAdjust="spacingAndGlyphs">40</text>
<text x="298.66" y="578.9" font-size="13" fill="#595959" font-family="Liberation Sans" textLength="16.31" lengthAdjust="spacingAndGlyphs">20</text>
<text x="365.16" y="578.9" font-size="13" fill="#595959" font-family="Liberation Sans" textLength="7.68" lengthAdjust="spacingAndGlyphs">0</text>
<text x="476.70" y="259.7" font-size="15" fill="#ffffff" font-family="Liberation Sans" font-weight="bold" textLength="106.69" lengthAdjust="spacingAndGlyphs">Chart Elements</text>
<text x="514.37" y="287.8" font-size="15.2" fill="#f2f2f2" font-family="Liberation Sans" stroke="#f2f2f2" stroke-width="0.3" textLength="31.03" lengthAdjust="spacingAndGlyphs">Axes</text>
<text x="514.37" y="311.8" font-size="15.2" fill="#f2f2f2" font-family="Liberation Sans" stroke="#f2f2f2" stroke-width="0.3" textLength="66.05" lengthAdjust="spacingAndGlyphs">Axis Titles</text>
<text x="513.64" y="335.8" font-size="15.2" fill="#f2f2f2" font-family="Liberation Sans" stroke="#f2f2f2" stroke-width="0.3" textLength="68.72" lengthAdjust="spacingAndGlyphs">Chart Title</text>
<text x="513.18" y="359.8" font-size="15.2" fill="#f2f2f2" font-family="Liberation Sans" stroke="#f2f2f2" stroke-width="0.3" textLength="79.46" lengthAdjust="spacingAndGlyphs">Data Labels</text>
<text x="513.18" y="383.8" font-size="15.2" fill="#f2f2f2" font-family="Liberation Sans" stroke="#f2f2f2" stroke-width="0.3" textLength="72.47" lengthAdjust="spacingAndGlyphs">Data Table</text>
<text x="513.22" y="407.8" font-size="15.2" fill="#f2f2f2" font-family="Liberation Sans" stroke="#f2f2f2" stroke-width="0.3" textLength="65.50" lengthAdjust="spacingAndGlyphs">Error Bars</text>
<text x="513.65" y="431.8" font-size="15.2" fill="#f2f2f2" font-family="Liberation Sans" stroke="#f2f2f2" stroke-width="0.3" textLength="58.48" lengthAdjust="spacingAndGlyphs">Gridlines</text>
<text x="513.17" y="455.8" font-size="15.2" fill="#f2f2f2" font-family="Liberation Sans" stroke="#f2f2f2" stroke-width="0.3" textLength="49.89" lengthAdjust="spacingAndGlyphs">Legend</text>
</svg>
</body></html>
